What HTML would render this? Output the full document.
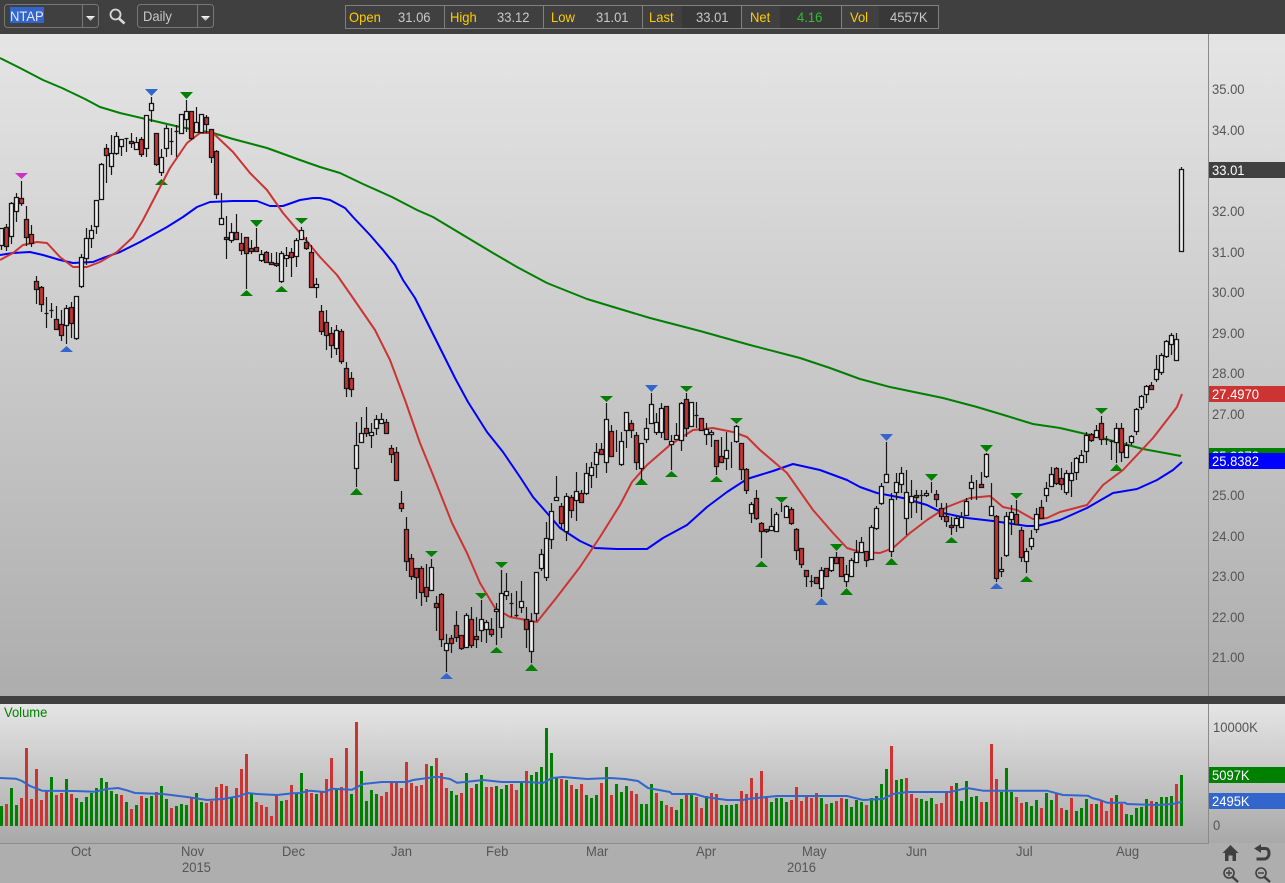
<!DOCTYPE html>
<html lang="en">
<head>
<meta charset="utf-8">
<title>NTAP Daily Chart</title>
<style>
html,body{margin:0;padding:0;width:1285px;height:883px;overflow:hidden;background:#b0b0b0}
svg{display:block;font-family:"Liberation Sans",Arial,sans-serif;font-size:14px}
text{transform-box:fill-box;transform-origin:0 50%;transform:scaleX(.93)}
.ax{fill:#555}
.w{fill:#fff}
.g{fill:#ffcc00}
.v{fill:#c8c8c8}
</style>
</head>
<body>
<svg xmlns="http://www.w3.org/2000/svg" width="1285" height="883" viewBox="0 0 1285 883">
<defs>
<linearGradient id="a" x1="0" y1="0" x2="0" y2="1"><stop offset="0" stop-color="#e5e5e5"/><stop offset="1" stop-color="#adadad"/></linearGradient>
<linearGradient id="b" x1="0" y1="0" x2="0" y2="1"><stop offset="0" stop-color="#e5e5e5"/><stop offset="1" stop-color="#a9a9a9"/></linearGradient>
<linearGradient id="ar" x1="0" y1="0" x2="0" y2="1"><stop offset="0" stop-color="#ffffff"/><stop offset="1" stop-color="#999999"/></linearGradient>
</defs>

<!-- backgrounds -->
<rect x="0" y="0" width="1285" height="883" fill="#aeaeae"/>
<rect x="0" y="34" width="1285" height="662" fill="url(#a)"/>
<rect x="0" y="704" width="1285" height="139" fill="url(#b)"/>
<rect x="0" y="0" width="1285" height="34" fill="#404040"/>
<rect x="0" y="696" width="1285" height="8" fill="#404040"/>
<rect x="1208" y="34" width="1" height="662" fill="#8a8a8a"/>
<rect x="1208" y="704" width="1" height="139" fill="#8a8a8a"/>
<rect x="0" y="843" width="1209" height="1" fill="#8e8e8e"/>

<!-- toolbar -->
<rect x="4.500" y="4.500" width="94" height="23" rx="3" fill="none" stroke="#777"/>
<path d="M82.500 5V27" stroke="#777"/>
<rect x="10" y="7" width="34" height="16" fill="#3366cc"/>
<text x="10" y="21" fill="#e8e8e8">NTAP</text>
<path d="M86 16h9l-4.500 5z" fill="url(#ar)"/>
<g fill="none" stroke="#d8d8d8">
<circle cx="115.500" cy="14.500" r="5" stroke-width="1.800"/>
<path d="M119 18.500L124.500 23.500" stroke-width="2.600"/>
</g>
<rect x="137.500" y="4.500" width="76" height="23" rx="3" fill="none" stroke="#777"/>
<path d="M197.500 5V27" stroke="#777"/>
<text x="143" y="21" fill="#c8c8c8">Daily</text>
<path d="M201 16h9l-4.500 5z" fill="url(#ar)"/>

<rect x="682" y="6" width="59" height="22" fill="#383838"/>
<rect x="780" y="6" width="61" height="22" fill="#383838"/>
<rect x="879" y="6" width="59" height="22" fill="#383838"/>
<rect x="345.500" y="5.500" width="593" height="23" fill="none" stroke="#808080"/>
<path d="M444.500 6V28M543.500 6V28M642.500 6V28M741.500 6V28M841.500 6V28" stroke="#808080"/>
<text x="349" y="22" class="g">Open</text><text x="398" y="22" class="v">31.06</text>
<text x="450" y="22" class="g">High</text><text x="497" y="22" class="v">33.12</text>
<text x="551" y="22" class="g">Low</text><text x="596" y="22" class="v">31.01</text>
<text x="649" y="22" class="g">Last</text><text x="696" y="22" class="v">33.01</text>
<text x="750" y="22" class="g">Net</text><text x="797" y="22" fill="#33bb33">4.16</text>
<text x="850" y="22" class="g">Vol</text><text x="890" y="22" class="v">4557K</text>

<!-- triangles -->
<g fill="#008000">
<path d="M155 185h13l-6.500-6zM180 92h13l-6.500 7zM240 296h13l-6.500-6zM250 220h13l-6.500 7zM275 292h13l-6.500-6zM295 218h13l-6.500 6zM350 495h13l-6.500-7zM425 551h13l-6.500 6zM475 593h13l-6.500 6zM490 653h13l-6.500-6zM495 562h13l-6.500 6zM525 671h13l-6.500-7zM600 396h13l-6.500 6zM635 485h13l-6.500-7zM665 477h13l-6.500-6zM680 386h13l-6.500 6zM710 482h13l-6.500-6zM730 418h13l-6.500 6zM755 567h13l-6.500-6zM775 497h13l-6.500 6zM830 544h13l-6.500 7zM840 595h13l-6.500-7zM885 565h13l-6.500-7zM925 474h13l-6.500 7zM945 543h13l-6.500-6zM980 445h13l-6.500 7zM1010 493h13l-6.500 6zM1020 582h13l-6.500-6zM1095 408h13l-6.500 6zM1110 471h13l-6.500-7z"/>
</g>
<g fill="#3366cc">
<path d="M60 352h13l-6.500-6zM145 89h13l-6.500 7zM440 679h13l-6.500-6zM645 385h13l-6.500 7zM815 605h13l-6.500-7zM880 434h13l-6.500 7zM990 589h13l-6.500-6z"/>
</g>
<path d="M15 173h13l-6.500 6z" fill="#cc33cc"/>

<!-- moving averages -->
<g fill="none" stroke-width="2" stroke-linejoin="round">
<path stroke="#008000" d="M0 58L20 68L43 80L62 88L85 99L100 107L120 113L150 120L180 127L213 133L233 139L267 148L300 160L320 167L340 173L363 184L392 197L417 210L433 217L463 235L493 253L517 267L547 283L587 299L620 309L650 318L700 331L750 345L800 358L830 368L860 379L890 387L943 398L977 407L1007 416L1033 424L1060 428L1090 435L1117 442L1143 449L1181 456"/>
<path stroke="#0000ff" d="M0 255L13 253L30 252L43 255L60 260L73 263L93 262L103 258L120 252L140 242L167 227L183 217L197 207L210 202L233 201L257 201L270 206L283 206L300 200L313 198L320 198L330 200L345 208L353 217L370 235L383 250L395 265L403 280L415 298L428 324L441 350L455 378L468 402L487 432L503 452L520 477L533 497L547 513L560 528L580 541L595 548L617 549L647 549L663 538L687 525L707 507L727 492L747 479L773 471L793 464L820 470L847 480L860 487L877 493L903 498L927 505L943 513L967 518L993 521L1027 526L1037 526L1060 520L1087 508L1113 493L1137 489L1157 480L1173 470L1182 462"/>
<path stroke="#cc3333" d="M0 260L13 253L23 245L37 242L47 243L60 257L73 267L87 267L100 262L117 252L133 237L143 220L157 193L170 168L187 143L200 133L213 133L233 152L250 173L267 190L283 213L300 233L320 257L337 275L353 298L375 330L390 360L405 400L420 443L433 475L452 523L467 553L480 583L495 608L510 617L537 622L557 597L580 567L600 537L620 505L632 482L647 465L670 445L693 430L713 428L733 432L747 437L760 450L787 473L813 510L833 533L847 548L860 552L880 553L893 548L910 533L927 520L947 507L970 498L990 496L1003 507L1017 510L1033 519L1047 518L1060 512L1087 505L1103 485L1123 470L1153 438L1177 407L1182 394"/>
</g>

<!-- candle wicks and thin bodies -->
<path fill="none" stroke="#151515" stroke-width="1.200" d="M1.500 228V250M6.500 224V251M11.500 202V244M16.500 193V222M21.500 181V206M26.500 206V246M31.500 225V247M36.500 276V304M41.500 286V312M46.500 297V328M51.500 303V318M56.500 306V330M61.500 310V341M66.500 305V344M71.500 302V338M76.500 296V340M81.500 254V288M86.500 228V265M91.500 225V248M96.500 200V234M101.500 163V199M106.500 144V183M111.500 135V175M116.500 132V155M121.500 139V156M126.500 138V152M131.500 133V148M136.500 137V150M141.500 137V157M146.500 115V157M151.500 97V122M156.500 133V166M161.500 149V176M166.500 125V157M171.500 128V155M176.500 125V157M181.500 114V133M186.500 100V132M191.500 111V140M196.500 107V133M201.500 114V133M206.500 115V133M211.500 129V163M216.500 150V199M221.500 193V224M226.500 216V259M231.500 223V243M236.500 214V240M241.500 233V255M246.500 237V289M251.500 240V254M256.500 228V252M261.500 250V262M266.500 251V263M271.500 253V265M276.500 252V267M281.500 251V283M286.500 247V267M291.500 248V277M296.500 238V267M301.500 227V240M306.500 237V250M311.500 245V287M316.500 278V298M321.500 305V335M326.500 310V350M331.500 327V358M336.500 325V355M341.500 329V364M346.500 362V397M351.500 372V397M356.500 422V487M361.500 417V443M366.500 407V437M371.500 423V448M376.500 415V435M381.500 413V423M386.500 419V433M391.500 445V463M396.500 447V481M401.500 491V512M406.500 517V571M411.500 554V580M416.500 568V599M421.500 566V606M426.500 564V602M431.500 559V590M436.500 596V631M441.500 593V647M446.500 634V672M451.500 635V653M456.500 611V642M461.500 635V650M466.500 613V648M471.500 607V648M476.500 617V648M481.500 600V642M486.500 620V643M491.500 618V637M496.500 603V645M501.500 570V638M506.500 573V600M511.500 593V617M516.500 591V617M521.500 581V613M526.500 607V648M531.500 613V663M536.500 572V621M541.500 549V571M546.500 522V581M551.500 503V549M556.500 476V500M561.500 503V528M566.500 493V541M571.500 495V518M576.500 472V521M581.500 490V503M586.500 463V495M591.500 462V488M596.500 443V478M601.500 443V455M606.500 403V473M611.500 425V457M616.500 430V452M621.500 432V466M626.500 412V448M631.500 420V438M636.500 432V470M641.500 443V480M646.500 418V443M651.500 393V423M656.500 413V435M661.500 403V438M666.500 406V440M671.500 435V470M676.500 423V440M681.500 402V451M686.500 393V437M691.500 402V427M696.500 402V428M701.500 418V430M706.500 423V445M711.500 430V447M716.500 440V475M721.500 437V463M726.500 432V470M731.500 442V468M736.500 425V443M741.500 443V480M746.500 468V494M751.500 502V523M756.500 490V520M761.500 522V558M766.500 529V533M771.500 508V531M776.500 512V532M781.500 503V512M786.500 505V518M791.500 507V525M796.500 528V560M801.500 548V568M806.500 570V587M811.500 575V587M816.500 577V584M821.500 567V597M826.500 568V577M831.500 557V572M836.500 552V564M841.500 557V577M846.500 565V587M851.500 558V577M856.500 540V563M861.500 537V553M866.500 551V567M871.500 525V560M876.500 506V530M881.500 483V505M886.500 442V483M891.500 493V557M896.500 473V500M901.500 467V493M906.500 470V535M911.500 480V518M916.500 490V513M921.500 490V520M926.500 490V497M931.500 482V493M936.500 490V507M941.500 503V520M946.500 503V527M951.500 517V535M956.500 516V532M961.500 512V527M966.500 498V516M971.500 475V500M976.500 480V500M981.500 472V488M986.500 453V478M991.500 483V516M996.500 515V582M1001.500 557V577M1006.500 512V557M1011.500 505V535M1016.500 500V525M1021.500 527V562M1026.500 548V573M1031.500 530V550M1036.500 508V533M1041.500 500V519M1046.500 482V502M1051.500 467V487M1056.500 467V485M1061.500 468V490M1066.500 470V495M1071.500 462V497M1076.500 457V480M1081.500 450V463M1086.500 432V463M1091.500 433V442M1096.500 425V438M1101.500 416V445M1106.500 436V445M1111.500 440V460M1116.500 423V463M1121.500 423V462M1126.500 442V458M1131.500 435V445M1136.500 408V435M1141.500 395V410M1146.500 385V403M1151.500 382V390M1156.500 355V382M1161.500 353V375M1166.500 340V358M1171.500 333V355M1176.500 333V361M1181.500 167V252M44.500 313.500h4M49.500 310.500h4M124.500 138.500h4M169.500 141.500h4M174.500 131.500h4M509.500 603.500h4M514.500 615.500h4M694.500 415.500h4M809.500 581.500h4M919.500 495.500h4M1104.500 439.500h4M1109.500 441.500h4"/>

<!-- white bodies -->
<path fill="#eeeeee" stroke="#151515" stroke-width="1.300" d="M-.5 228.500h4V245.500h-4zM9.500 203.500h4V236.500h-4zM14.500 197.500h4V211.500h-4zM64.500 308.500h4V325.500h-4zM74.500 296.500h4V338.500h-4zM79.500 257.500h4V286.500h-4zM84.500 238.500h4V258.500h-4zM89.500 230.500h4V238.500h-4zM94.500 200.500h4V226.500h-4zM99.500 164.500h4V199.500h-4zM109.500 153.500h4V166.500h-4zM114.500 136.500h4V153.500h-4zM119.500 139.500h4V146.500h-4zM134.500 142.500h4V149.500h-4zM144.500 115.500h4V148.500h-4zM149.500 103.500h4V110.500h-4zM159.500 157.500h4V172.500h-4zM164.500 128.500h4V148.500h-4zM179.500 114.500h4V133.500h-4zM184.500 111.500h4V119.500h-4zM194.500 122.500h4V132.500h-4zM199.500 114.500h4V132.500h-4zM219.500 218.500h4V224.500h-4zM229.500 232.500h4V240.500h-4zM259.500 254.500h4V260.500h-4zM279.500 253.500h4V281.500h-4zM284.500 255.500h4V258.500h-4zM294.500 240.500h4V256.500h-4zM299.500 230.500h4V239.500h-4zM314.500 284.500h4V287.500h-4zM334.500 330.500h4V348.500h-4zM354.500 445.500h4V468.500h-4zM359.500 433.500h4V442.500h-4zM369.500 432.500h4V435.500h-4zM374.500 419.500h4V428.500h-4zM379.500 419.500h4V423.500h-4zM429.500 567.500h4V590.500h-4zM444.500 643.500h4V650.500h-4zM464.500 615.500h4V647.500h-4zM479.500 619.500h4V630.500h-4zM484.500 622.500h4V629.500h-4zM494.500 609.500h4V611.500h-4zM499.500 593.500h4V627.500h-4zM504.500 591.500h4V595.500h-4zM519.500 601.500h4V607.500h-4zM529.500 621.500h4V651.500h-4zM534.500 572.500h4V613.500h-4zM539.500 554.500h4V568.500h-4zM544.500 538.500h4V577.500h-4zM549.500 511.500h4V539.500h-4zM554.500 497.500h4V500.500h-4zM564.500 496.500h4V531.500h-4zM574.500 491.500h4V500.500h-4zM584.500 473.500h4V493.500h-4zM589.500 467.500h4V475.500h-4zM594.500 452.500h4V464.500h-4zM604.500 419.500h4V462.500h-4zM619.500 441.500h4V464.500h-4zM624.500 412.500h4V430.500h-4zM639.500 443.500h4V468.500h-4zM644.500 428.500h4V439.500h-4zM649.500 404.500h4V423.500h-4zM654.500 422.500h4V432.500h-4zM659.500 408.500h4V432.500h-4zM669.500 441.500h4V444.500h-4zM674.500 435.500h4V439.500h-4zM679.500 403.500h4V440.500h-4zM689.500 402.500h4V426.500h-4zM704.500 429.500h4V434.500h-4zM709.500 432.500h4V434.500h-4zM724.500 450.500h4V458.500h-4zM734.500 426.500h4V441.500h-4zM749.500 504.500h4V513.500h-4zM769.500 526.500h4V530.500h-4zM774.500 514.500h4V531.500h-4zM784.500 506.500h4V517.500h-4zM819.500 570.500h4V588.500h-4zM829.500 557.500h4V570.500h-4zM844.500 574.500h4V581.500h-4zM849.500 560.500h4V576.500h-4zM854.500 552.500h4V562.500h-4zM859.500 542.500h4V552.500h-4zM869.500 527.500h4V559.500h-4zM874.500 508.500h4V528.500h-4zM879.500 486.500h4V503.500h-4zM884.500 474.500h4V482.500h-4zM889.500 499.500h4V551.500h-4zM894.500 482.500h4V492.500h-4zM899.500 473.500h4V484.500h-4zM904.500 492.500h4V518.500h-4zM909.500 496.500h4V502.500h-4zM924.500 493.500h4V495.500h-4zM954.500 518.500h4V525.500h-4zM959.500 517.500h4V527.500h-4zM964.500 501.500h4V515.500h-4zM969.500 482.500h4V488.500h-4zM984.500 454.500h4V476.500h-4zM989.500 506.500h4V515.500h-4zM999.500 569.500h4V571.500h-4zM1004.500 516.500h4V555.500h-4zM1009.500 512.500h4V519.500h-4zM1024.500 551.500h4V561.500h-4zM1029.500 538.500h4V546.500h-4zM1034.500 514.500h4V529.500h-4zM1044.500 488.500h4V495.500h-4zM1049.500 474.500h4V486.500h-4zM1064.500 473.500h4V492.500h-4zM1069.500 473.500h4V480.500h-4zM1074.500 458.500h4V472.500h-4zM1079.500 455.500h4V462.500h-4zM1084.500 435.500h4V451.500h-4zM1094.500 430.500h4V437.500h-4zM1114.500 428.500h4V442.500h-4zM1124.500 445.500h4V457.500h-4zM1129.500 436.500h4V442.500h-4zM1134.500 409.500h4V431.500h-4zM1139.500 396.500h4V407.500h-4zM1144.500 386.500h4V394.500h-4zM1154.500 369.500h4V379.500h-4zM1159.500 355.500h4V372.500h-4zM1164.500 341.500h4V356.500h-4zM1169.500 335.500h4V344.500h-4zM1174.500 339.500h4V360.500h-4zM1179.500 169.500h4V251.500h-4z"/>

<!-- red bodies -->
<path fill="#cc3333" stroke="#151515" stroke-width="1.300" d="M4.500 227.500h4V246.500h-4zM19.500 198.500h4V203.500h-4zM24.500 219.500h4V237.500h-4zM29.500 234.500h4V243.500h-4zM34.500 281.500h4V289.500h-4zM39.500 287.500h4V304.500h-4zM54.500 319.500h4V329.500h-4zM59.500 324.500h4V335.500h-4zM69.500 307.500h4V323.500h-4zM104.500 148.500h4V155.500h-4zM129.500 141.500h4V143.500h-4zM139.500 139.500h4V154.500h-4zM154.500 133.500h4V164.500h-4zM189.500 111.500h4V138.500h-4zM204.500 117.500h4V124.500h-4zM209.500 129.500h4V157.500h-4zM214.500 151.500h4V194.500h-4zM224.500 237.500h4V239.500h-4zM234.500 232.500h4V239.500h-4zM239.500 243.500h4V250.500h-4zM244.500 237.500h4V253.500h-4zM249.500 248.500h4V251.500h-4zM254.500 247.500h4V251.500h-4zM264.500 252.500h4V262.500h-4zM269.500 262.500h4V264.500h-4zM274.500 263.500h4V265.500h-4zM289.500 252.500h4V257.500h-4zM304.500 242.500h4V248.500h-4zM309.500 252.500h4V287.500h-4zM319.500 311.500h4V331.500h-4zM324.500 322.500h4V335.500h-4zM329.500 333.500h4V345.500h-4zM339.500 331.500h4V361.500h-4zM344.500 368.500h4V388.500h-4zM349.500 378.500h4V389.500h-4zM364.500 428.500h4V433.500h-4zM384.500 422.500h4V433.500h-4zM389.500 448.500h4V454.500h-4zM394.500 452.500h4V480.500h-4zM399.500 503.500h4V508.500h-4zM404.500 529.500h4V561.500h-4zM409.500 558.500h4V576.500h-4zM414.500 568.500h4V577.500h-4zM419.500 568.500h4V592.500h-4zM424.500 587.500h4V596.500h-4zM434.500 603.500h4V607.500h-4zM439.500 594.500h4V639.500h-4zM449.500 638.500h4V643.500h-4zM454.500 625.500h4V637.500h-4zM459.500 635.500h4V648.500h-4zM469.500 619.500h4V645.500h-4zM474.500 636.500h4V639.500h-4zM489.500 629.500h4V634.500h-4zM524.500 619.500h4V629.500h-4zM559.500 506.500h4V523.500h-4zM569.500 497.500h4V510.500h-4zM579.500 493.500h4V502.500h-4zM599.500 449.500h4V454.500h-4zM609.500 431.500h4V456.500h-4zM629.500 423.500h4V430.500h-4zM634.500 435.500h4V462.500h-4zM664.500 406.500h4V439.500h-4zM684.500 399.500h4V428.500h-4zM699.500 418.500h4V430.500h-4zM714.500 440.500h4V466.500h-4zM719.500 456.500h4V462.500h-4zM739.500 443.500h4V469.500h-4zM744.500 469.500h4V490.500h-4zM754.500 498.500h4V518.500h-4zM759.500 523.500h4V531.500h-4zM764.500 529.500h4V531.500h-4zM789.500 509.500h4V523.500h-4zM794.500 529.500h4V550.500h-4zM799.500 548.500h4V564.500h-4zM804.500 570.500h4V576.500h-4zM814.500 577.500h4V583.500h-4zM824.500 568.500h4V576.500h-4zM834.500 557.500h4V563.500h-4zM839.500 557.500h4V576.500h-4zM864.500 551.500h4V560.500h-4zM914.500 495.500h4V497.500h-4zM934.500 494.500h4V499.500h-4zM939.500 508.500h4V516.500h-4zM944.500 516.500h4V521.500h-4zM949.500 525.500h4V527.500h-4zM979.500 484.500h4V487.500h-4zM994.500 516.500h4V578.500h-4zM1014.500 514.500h4V524.500h-4zM1019.500 530.500h4V557.500h-4zM1039.500 507.500h4V518.500h-4zM1054.500 468.500h4V483.500h-4zM1059.500 478.500h4V484.500h-4zM1089.500 434.500h4V440.500h-4zM1099.500 423.500h4V439.500h-4zM1119.500 428.500h4V452.500h-4zM1149.500 385.500h4V389.500h-4z"/>

<!-- volume red -->
<path fill="none" stroke="#cc3333" stroke-width="3" shape-rendering="crispEdges" d="M6.500 826V804M21.500 826V798M26.500 826V748M31.500 826V799M36.500 826V769M41.500 826V800M46.500 826V791M56.500 826V795M61.500 826V793M71.500 826V794M121.500 826V795M131.500 826V809M141.500 826V796M156.500 826V792M171.500 826V808M191.500 826V798M206.500 826V803M211.500 826V801M216.500 826V787M221.500 826V784M226.500 826V786M236.500 826V788M241.500 826V769M246.500 826V754M256.500 826V802M261.500 826V805M266.500 826V807M271.500 826V816M276.500 826V796M286.500 826V800M291.500 826V785M306.500 826V789M311.500 826V793M321.500 826V792M326.500 826V779M331.500 826V758M341.500 826V787M346.500 826V748M356.500 826V722M381.500 826V796M386.500 826V792M391.500 826V782M396.500 826V782M401.500 826V788M406.500 826V762M411.500 826V783M416.500 826V786M421.500 826V785M426.500 826V764M436.500 826V758M441.500 826V773M446.500 826V788M461.500 826V793M471.500 826V788M486.500 826V787M491.500 826V787M511.500 826V784M516.500 826V790M526.500 826V771M561.500 826V779M571.500 826V785M581.500 826V784M601.500 826V783M611.500 826V795M631.500 826V791M636.500 826V794M656.500 826V793M666.500 826V805M671.500 826V807M686.500 826V795M696.500 826V797M701.500 826V808M711.500 826V793M716.500 826V794M741.500 826V791M746.500 826V794M751.500 826V778M756.500 826V793M761.500 826V771M766.500 826V796M791.500 826V800M796.500 826V787M801.500 826V801M806.500 826V797M811.500 826V798M816.500 826V793M826.500 826V804M836.500 826V801M841.500 826V798M866.500 826V805M891.500 826V746M906.500 826V778M911.500 826V794M916.500 826V798M936.500 826V804M941.500 826V803M946.500 826V793M951.500 826V786M981.500 826V802M991.500 826V744M996.500 826V779M1016.500 826V797M1021.500 826V803M1041.500 826V808M1056.500 826V794M1061.500 826V808M1071.500 826V798M1091.500 826V804M1101.500 826V801M1106.500 826V811M1111.500 826V798M1121.500 826V804M1151.500 826V801M1176.500 826V784"/>

<!-- volume green -->
<path fill="none" stroke="#008000" stroke-width="3" shape-rendering="crispEdges" d="M1.500 826V806M11.500 826V788M16.500 826V805M51.500 826V777M66.500 826V779M76.500 826V798M81.500 826V802M86.500 826V797M91.500 826V793M96.500 826V788M101.500 826V778M106.500 826V782M111.500 826V791M116.500 826V794M126.500 826V802M136.500 826V805M146.500 826V798M151.500 826V796M161.500 826V786M166.500 826V799M176.500 826V806M181.500 826V804M186.500 826V805M196.500 826V793M201.500 826V802M231.500 826V798M251.500 826V794M281.500 826V801M296.500 826V794M301.500 826V773M316.500 826V794M336.500 826V789M351.500 826V794M361.500 826V771M366.500 826V801M371.500 826V790M376.500 826V794M431.500 826V766M451.500 826V791M456.500 826V795M466.500 826V773M476.500 826V784M481.500 826V775M496.500 826V786M501.500 826V789M506.500 826V785M521.500 826V782M531.500 826V775M536.500 826V772M541.500 826V767M546.500 826V728M551.500 826V753M556.500 826V778M566.500 826V780M576.500 826V789M586.500 826V795M591.500 826V798M596.500 826V795M606.500 826V767M616.500 826V784M621.500 826V792M626.500 826V786M641.500 826V804M646.500 826V804M651.500 826V784M661.500 826V801M676.500 826V810M681.500 826V799M691.500 826V795M706.500 826V796M721.500 826V805M726.500 826V805M731.500 826V805M736.500 826V804M771.500 826V802M776.500 826V798M781.500 826V798M786.500 826V802M821.500 826V798M831.500 826V803M846.500 826V799M851.500 826V807M856.500 826V800M861.500 826V802M871.500 826V798M876.500 826V796M881.500 826V784M886.500 826V769M896.500 826V780M901.500 826V779M921.500 826V799M926.500 826V801M931.500 826V798M956.500 826V783M961.500 826V801M966.500 826V781M971.500 826V797M976.500 826V796M986.500 826V802M1001.500 826V792M1006.500 826V768M1011.500 826V792M1026.500 826V802M1031.500 826V806M1036.500 826V800M1046.500 826V793M1051.500 826V800M1066.500 826V810M1076.500 826V811M1081.500 826V808M1086.500 826V799M1096.500 826V804M1116.500 826V795M1126.500 826V814M1131.500 826V815M1136.500 826V808M1141.500 826V807M1146.500 826V799M1156.500 826V802M1161.500 826V797M1166.500 826V797M1171.500 826V796M1181.500 826V775"/>

<!-- volume MA -->
<path fill="none" stroke="#3366cc" stroke-width="2" stroke-linejoin="round" d="M0 778L16 778.700L22 781L30 786L42 790.700L75 791L95 791.700L107 789L118 788L128 790.700L135 793L163 794L187 797L207 800L223 799L240 796L247 793L257 794L277 795L293 793.300L300 793L310 790.700L325 792L332 788.700L352 789.700L363 784L382 782L407 782L413 780L437 776.700L450 779L457 782.700L465 782L483 780L502 782L527 782L543 783L552 778L563 777L587 779L610 778L625 779L638 781L648 788L670 792L672 794L695 794L705 797L727 800L743 800L747 799L777 796L800 796L847 796L863 800L883 799L893 794L907 792L950 792L967 788L983 790.700L1047 790.700L1063 795L1088 795.700L1092 798L1100 800L1107 802.700L1125 802.700L1127 804L1157 805L1173 804L1182 801.700"/>

<!-- price axis -->
<g class="ax">
<text x="1212" y="94">35.00</text>
<text x="1212" y="135">34.00</text>
<text x="1212" y="216">32.00</text>
<text x="1212" y="257">31.00</text>
<text x="1212" y="297">30.00</text>
<text x="1212" y="338">29.00</text>
<text x="1212" y="378">28.00</text>
<text x="1212" y="419">27.00</text>
<text x="1212" y="500">25.00</text>
<text x="1212" y="541">24.00</text>
<text x="1212" y="581">23.00</text>
<text x="1212" y="622">22.00</text>
<text x="1212" y="662">21.00</text>
</g>
<rect x="1209" y="162" width="76" height="16" fill="#404040"/>
<text x="1212" y="175" class="w">33.01</text>
<rect x="1209" y="386" width="76" height="16" fill="#cc3333"/>
<text x="1212" y="399" class="w">27.4970</text>
<rect x="1209" y="448" width="76" height="16" fill="#008000"/>
<text x="1212" y="461" class="w">25.9373</text>
<rect x="1209" y="453" width="76" height="16" fill="#0000ff"/>
<text x="1212" y="466" class="w">25.8382</text>

<!-- volume axis -->
<text x="4" y="717" fill="#008000">Volume</text>
<text x="1213" y="732" class="ax">10000K</text>
<rect x="1209" y="767" width="76" height="16" fill="#008000"/>
<text x="1212" y="780" class="w">5097K</text>
<rect x="1209" y="793" width="76" height="16" fill="#3366cc"/>
<text x="1212" y="806" class="w">2495K</text>
<text x="1213" y="830" class="ax">0</text>

<!-- date axis -->
<g class="ax">
<text x="71" y="856">Oct</text>
<text x="181" y="856">Nov</text>
<text x="182" y="872">2015</text>
<text x="282" y="856">Dec</text>
<text x="391" y="856">Jan</text>
<text x="486" y="856">Feb</text>
<text x="586" y="856">Mar</text>
<text x="696" y="856">Apr</text>
<text x="802" y="856">May</text>
<text x="787" y="872">2016</text>
<text x="906" y="856">Jun</text>
<text x="1016" y="856">Jul</text>
<text x="1116" y="856">Aug</text>
</g>

<!-- nav icons -->
<g fill="#404040">
<path d="M1230.500 845L1238.500 853H1236V861H1232.500V855.500H1228.500V861H1225V853H1222.500Z"/>
</g>
<g fill="none" stroke="#404040">
<path d="M1259 848.500H1265C1268.500 848.500 1269 851 1269 853.500C1269 856.500 1267 859 1264 859H1256.500" stroke-width="3"/>
<path d="M1255 848.500L1260.500 845V852Z" fill="#404040" stroke-width="1"/>
<circle cx="1229" cy="873" r="5" stroke-width="1.600"/>
<path d="M1232.500 877L1238 882" stroke-width="2.400"/>
<path d="M1226 873H1232M1229 870V876" stroke-width="1.400"/>
<circle cx="1261" cy="873" r="5" stroke-width="1.600"/>
<path d="M1264.500 877L1270 882" stroke-width="2.400"/>
<path d="M1258 873H1264" stroke-width="1.400"/>
</g>
</svg>
</body>
</html>
